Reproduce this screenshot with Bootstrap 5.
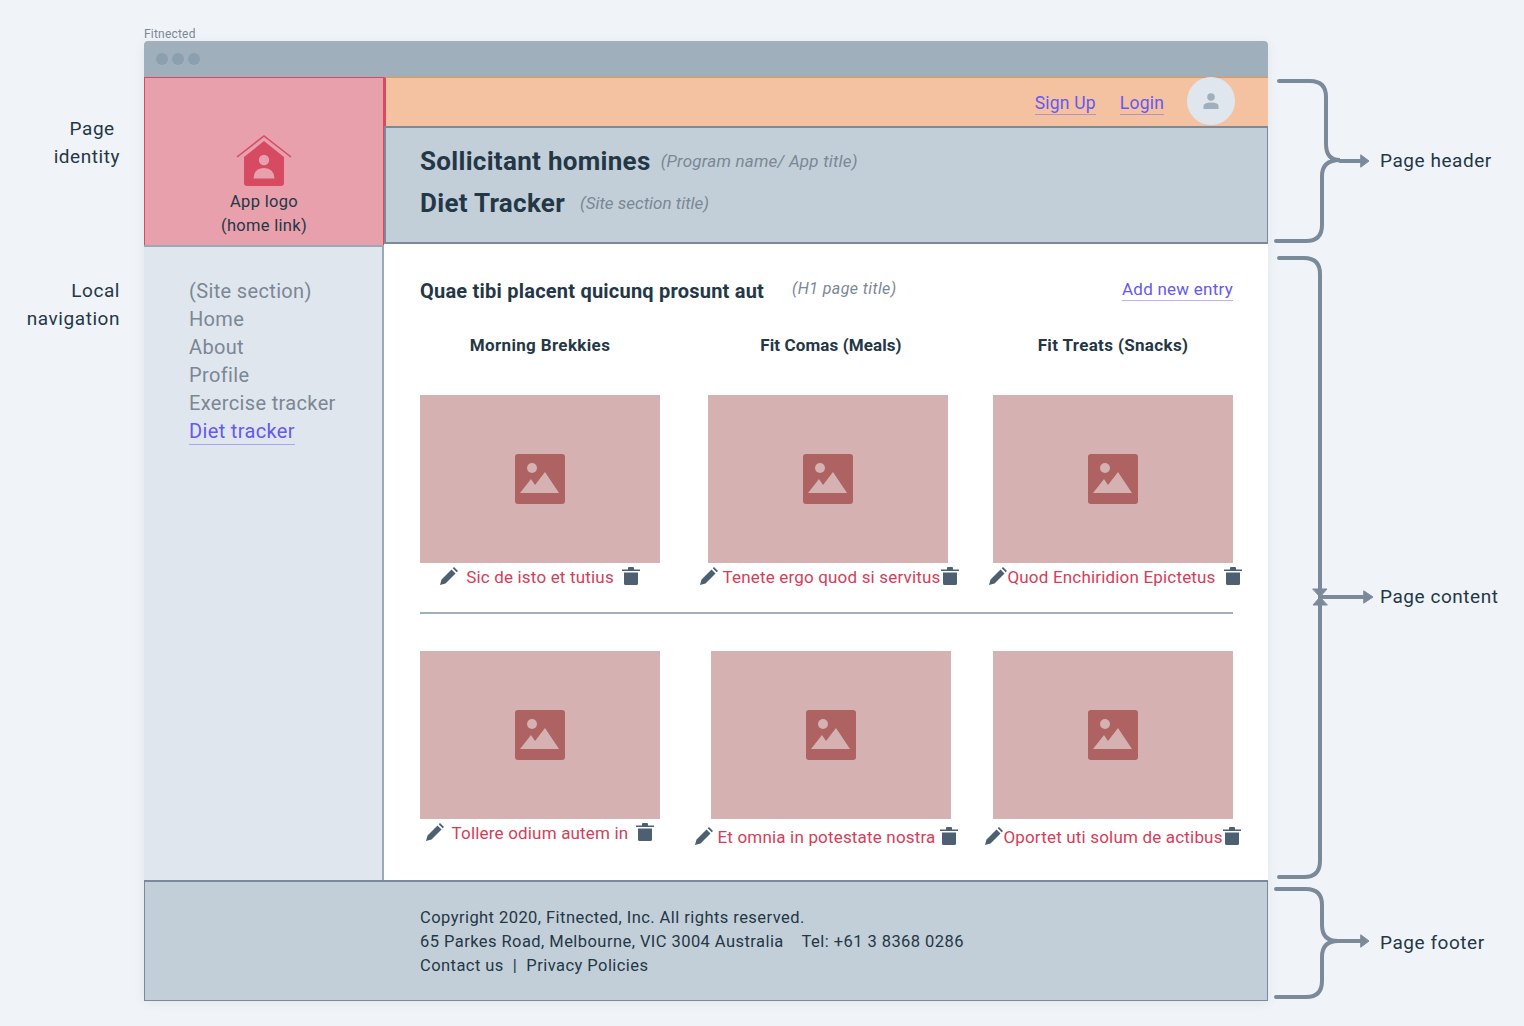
<!DOCTYPE html>
<html lang="en">
<head>
  <meta charset="UTF-8" />
  <meta name="viewport" content="width=device-width, initial-scale=1.0" />
  <title>Fitnected wireframe</title>
  <link href="https://cdn.jsdelivr.net/npm/bootstrap@5.3.3/dist/css/bootstrap.min.css" rel="stylesheet" />
  <style>
    body {
      background-color: #f0f4f8;
      color: #243746;
      font-family: Roboto, "Liberation Sans", sans-serif;
      overflow: hidden;
    }

    .sheet { width: 1524px; height: 1026px; }

    /* annotations either side of the wireframe */
    .notes-left { width: 144px; padding: 115px 24px 0 0; text-align: right; font-size: 19px; line-height: 28px; letter-spacing: .55px; }
    .notes-left .second { margin-top: 106px; }
    .notes-right { padding: 78px 0 0 4px; font-size: 19px; letter-spacing: .55px; }
    .notes-right svg { display: block; flex: none; }
    .brace-content { margin-top: 10px; }
    .brace-footer { margin-top: 6px; }
    .content-label { align-self: flex-start; margin-top: 329px; }
    .notes-right span { margin-left: 4px; white-space: nowrap; line-height: 28px; }

    /* browser frame */
    .frame { width: 1124px; padding-top: 27px; }
    .frame-name { font-size: 12px; line-height: 14px; letter-spacing: .2px; color: #7b8794; }
    .browser { height: 960px; box-shadow: 0 2px 10px rgba(60, 80, 100, .08); }
    .titlebar { height: 36px; background: #9fb0bc; border-radius: 4px 4px 0 0; padding-left: 12px; }
    .titlebar i { width: 12px; height: 12px; border-radius: 50%; background: #8c9fae; }

    /* page header */
    .logo-panel { width: 240px; height: 168px; background: #e8a0ad; border: 1px solid #d64a62; border-bottom: 0; padding-bottom: 7px; font-size: 16.5px; line-height: 24px; letter-spacing: .3px; }
    .logo-panel svg { margin-bottom: 4px; }
    .header-side { width: 884px; background: #fff; }
    .topbar { height: 49px; background: #f4c2a0; border-top: 1px solid #e9974f; border-left: 2px solid #d64a62; padding-right: 33px; font-size: 17.5px; letter-spacing: .2px; }
    .topbar .wire-link { margin-top: 2px; }
    .avatar { width: 48px; height: 48px; border-radius: 50%; background: #dfe6ee; margin-left: 23px; margin-top: -2px; }
    .band { height: 118px; background: #c2cfd9; border: 2px solid #7b8a9a; border-right-width: 1px; padding-left: 34px; }
    .band-line { line-height: 42px; }
    .band-title { font-size: 26px; font-weight: 700; letter-spacing: .3px; margin: 0 10px 0 0; line-height: 42px; }
    .hint { font-style: italic; color: #7b8794; font-size: 17px; letter-spacing: .2px; }
    .band-line .tight { letter-spacing: 0; margin-left: 5px; }

    a.wire-link { color: #6559f0; text-decoration: none; border-bottom: 1.5px solid rgba(101, 89, 240, .45); line-height: 22px; display: inline-block; }

    /* body */
    .main-row { height: 635px; }
    .side-nav { width: 240px; background: #dfe6ee; border-top: 2px solid #9aa9b6; border-right: 2px solid #9aa9b6; padding: 30px 0 0 45px; font-size: 20px; letter-spacing: .35px; color: #7b8794; }
    .side-nav li { line-height: 28px; height: 28px; }
    .side-nav a.wire-link { line-height: 25px; }
    .page-main { width: 884px; background: #fff; padding: 32px 35px 0 36px; }
    .page-head { height: 28px; }
    .page-title { font-size: 20px; font-weight: 700; letter-spacing: .22px; margin: 0 28px 0 0; line-height: 28px; }
    .page-head .hint { font-size: 16px; letter-spacing: .4px; margin-top: -4px; }
    .page-head .wire-link { font-size: 17px; letter-spacing: .25px; margin-top: -4px; }
    .col-heads { margin-top: 28px; height: 24px; font-size: 17px; font-weight: 700; line-height: 24px; letter-spacing: .35px; }
    .col-heads div { width: 240px; text-align: center; }
    .col-heads .mid { margin-left: 51px; letter-spacing: .1px; }
    .col-heads .last { margin-left: 42px; }
    .shots { margin-top: 38px; }
    .shots.two { margin-top: 37px; }
    .shots .mid { margin-left: 48px; }
    .shots .last { margin-left: 45px; }
    .shots.two .mid { margin-left: 51px; }
    .shots.two .last { margin-left: 42px; }
    .shot { width: 240px; }
    .thumb { height: 168px; background: #d5b1b1; }
    .caption { height: 30px; font-size: 17px; letter-spacing: .18px; color: #d63d58; white-space: nowrap; }
    .caption.down { margin-top: 4px; }
    .caption svg { flex: none; margin-top: -4px; }
    .shift-a { padding-left: 3px; }
    .shift-b { padding-left: 5px; }
    .shift-c { padding-right: 9px; }
    .divider { height: 2px; background: #9fb0bc; margin-top: 19px; }

    /* footer */
    .page-footer { height: 121px; background: #c2cfd9; border: 1px solid #7b8a9a; border-top-width: 2px; padding: 24px 0 0 275px; font-size: 16.5px; line-height: 24px; letter-spacing: .44px; }
  </style>
</head>
<body>
  <svg width="0" height="0" class="d-none">
    <symbol id="pic" viewBox="0 0 50 50">
      <rect width="50" height="50" rx="3" fill="#ae6262" />
      <circle cx="17" cy="14" r="5" fill="#d5b1b1" />
      <path d="M5 39 L16 25 L20 31 L30 18 L44 39 Z" fill="#d5b1b1" />
    </symbol>
    <symbol id="pen" viewBox="0 0 18 18">
      <path d="M0 18 L1.5 12.5 L11.5 2.5 L15.5 6.5 L5.5 16.5 Z M12.7 1.3 L14 0 L18 4 L16.7 5.3 Z" fill="#4d6072" />
    </symbol>
    <symbol id="bin" viewBox="0 0 18 18">
      <path d="M0 2.5 H6 V1 Q6 0 7 0 H11 Q12 0 12 1 V2.5 H18 V4 H0 Z M2 5.5 H16 V16.5 Q16 18 14.500 18 H3.500 Q2 18 2 16.500 Z" fill="#4d6072" />
    </symbol>
  </svg>

  <div class="sheet d-flex">
    <div class="notes-left">
      <div>Page&nbsp;<br />identity</div>
      <div class="second">Local<br />navigation</div>
    </div>

    <div class="frame">
      <div class="frame-name">Fitnected</div>
      <div class="browser d-flex flex-column">
        <div class="titlebar d-flex align-items-center gap-1">
          <i></i><i></i><i></i>
        </div>

        <div class="d-flex">
          <div class="logo-panel d-flex flex-column align-items-center justify-content-end text-center">
            <svg width="56" height="52" viewBox="0 0 56 52">
              <path d="M1 23 L28 2 L55 23" fill="none" stroke="#d64a62" stroke-width="1.500" />
              <path d="M8 23 L28 7 L48 23 V49 Q48 52 45 52 H11 Q8 52 8 49 Z" fill="#d64a62" />
              <circle cx="28" cy="26" r="5.200" fill="#e8a0ad" />
              <path d="M17.500 44.500 Q18 34 28 34 Q38 34 38.500 44.500 Z" fill="#e8a0ad" />
            </svg>
            <div>App logo<br />(home link)</div>
          </div>
          <div class="header-side">
            <div class="topbar d-flex align-items-center justify-content-end">
              <a class="wire-link" href="#">Sign Up</a>
              <a class="wire-link ms-4" href="#">Login</a>
              <div class="avatar d-flex align-items-center justify-content-center">
                <svg width="16" height="16" viewBox="0 0 16 16">
                  <circle cx="8" cy="4" r="3.800" fill="#9fb0bc" />
                  <path d="M0.500 16 V13 Q0.500 9.500 8 9.500 Q15.500 9.500 15.500 13 V16 Z" fill="#9fb0bc" />
                </svg>
              </div>
            </div>
            <div class="band">
              <div class="band-line d-flex align-items-center mt-2 pt-1">
                <h2 class="band-title">Sollicitant homines</h2>
                <span class="hint">(Program name/ App title)</span>
              </div>
              <div class="band-line d-flex align-items-center">
                <h3 class="band-title">Diet Tracker</h3>
                <span class="hint tight">(Site section title)</span>
              </div>
            </div>
          </div>
        </div>

        <div class="main-row d-flex">
          <nav class="side-nav">
            <ul class="list-unstyled m-0">
              <li>(Site section)</li>
              <li>Home</li>
              <li>About</li>
              <li>Profile</li>
              <li>Exercise tracker</li>
              <li><a class="wire-link" href="#">Diet tracker</a></li>
            </ul>
          </nav>

          <main class="page-main">
            <div class="page-head d-flex align-items-center">
              <h1 class="page-title">Quae tibi placent quicunq prosunt aut</h1>
              <span class="hint">(H1 page title)</span>
              <a class="wire-link ms-auto" href="#">Add new entry</a>
            </div>

            <div class="col-heads d-flex">
              <div>Morning Brekkies</div>
              <div class="mid">Fit Comas (Meals)</div>
              <div class="last">Fit Treats (Snacks)</div>
            </div>

            <div class="shots d-flex">
              <div class="shot">
                <div class="thumb d-flex align-items-center justify-content-center"><svg width="50" height="50"><use href="#pic" /></svg></div>
                <div class="caption d-flex align-items-center justify-content-center">
                  <svg width="18" height="18" class="me-2"><use href="#pen" /></svg>Sic de isto et tutius<svg width="18" height="18" class="ms-2"><use href="#bin" /></svg>
                </div>
              </div>
              <div class="shot mid">
                <div class="thumb d-flex align-items-center justify-content-center"><svg width="50" height="50"><use href="#pic" /></svg></div>
                <div class="caption shift-a d-flex align-items-center justify-content-center">
                  <svg width="18" height="18" class="me-1"><use href="#pen" /></svg>Tenete ergo quod si servitus<svg width="18" height="18"><use href="#bin" /></svg>
                </div>
              </div>
              <div class="shot last">
                <div class="thumb d-flex align-items-center justify-content-center"><svg width="50" height="50"><use href="#pic" /></svg></div>
                <div class="caption shift-b d-flex align-items-center justify-content-center">
                  <svg width="18" height="18"><use href="#pen" /></svg>Quod Enchiridion Epictetus<svg width="18" height="18" class="ms-2"><use href="#bin" /></svg>
                </div>
              </div>
            </div>

            <div class="divider"></div>

            <div class="shots two d-flex">
              <div class="shot">
                <div class="thumb d-flex align-items-center justify-content-center"><svg width="50" height="50"><use href="#pic" /></svg></div>
                <div class="caption d-flex align-items-center justify-content-center">
                  <svg width="18" height="18" class="me-2"><use href="#pen" /></svg>Tollere odium autem in<svg width="18" height="18" class="ms-2"><use href="#bin" /></svg>
                </div>
              </div>
              <div class="shot mid">
                <div class="thumb d-flex align-items-center justify-content-center"><svg width="50" height="50"><use href="#pic" /></svg></div>
                <div class="caption down shift-c d-flex align-items-center justify-content-center">
                  <svg width="18" height="18" class="me-1"><use href="#pen" /></svg>Et omnia in potestate nostra<svg width="18" height="18" class="ms-1"><use href="#bin" /></svg>
                </div>
              </div>
              <div class="shot last">
                <div class="thumb d-flex align-items-center justify-content-center"><svg width="50" height="50"><use href="#pic" /></svg></div>
                <div class="caption down d-flex align-items-center justify-content-center">
                  <svg width="18" height="18"><use href="#pen" /></svg>Oportet uti solum de actibus<svg width="18" height="18"><use href="#bin" /></svg>
                </div>
              </div>
            </div>
          </main>
        </div>

        <footer class="page-footer">
          Copyright 2020, Fitnected, Inc. All rights reserved.<br />
          65 Parkes Road, Melbourne, VIC 3004 Australia &nbsp;&nbsp; Tel: +61 3 8368 0286<br />
          Contact us &nbsp;|&nbsp; Privacy Policies
        </footer>
      </div>
    </div>

    <div class="notes-right d-flex flex-column">
      <div class="d-flex align-items-center">
        <svg width="104" height="166" viewBox="1272 78 104 166" fill="none" stroke="#7b8a9a" stroke-width="4" stroke-linecap="round">
          <path d="M1279 81 H1310 Q1326 81 1326 97 V144 Q1326 160 1340 160 Q1322 160 1322 176 V225 Q1322 241 1306 241 H1276" />
          <path d="M1340 161 H1362" />
          <path d="M1361 155 L1369 161 L1361 167 Z" fill="#7b8a9a" stroke-width="1" />
        </svg>
        <span>Page header</span>
      </div>
      <div class="d-flex brace-content">
        <svg width="104" height="626" viewBox="1272 254 104 626" fill="none" stroke="#7b8a9a" stroke-width="4" stroke-linecap="round">
          <path d="M1279 258 H1304 Q1320 258 1320 274 V861 Q1320 877 1304 877 H1279" />
          <path d="M1320 597 H1364" />
          <path d="M1313 589 H1327 L1313 605 H1327 Z" fill="#7b8a9a" stroke-width="1" />
          <path d="M1364 591 L1373 597 L1364 603 Z" fill="#7b8a9a" stroke-width="1" />
        </svg>
        <span class="content-label">Page content</span>
      </div>
      <div class="d-flex align-items-center brace-footer">
        <svg width="104" height="114" viewBox="1272 886 104 114" fill="none" stroke="#7b8a9a" stroke-width="4" stroke-linecap="round">
          <path d="M1276 889 H1306 Q1322 889 1322 905 V925 Q1322 941 1338 941 Q1322 941 1322 957 V981 Q1322 997 1306 997 H1276" />
          <path d="M1338 941 H1362" />
          <path d="M1361 935 L1369 941 L1361 947 Z" fill="#7b8a9a" stroke-width="1" />
        </svg>
        <span>Page footer</span>
      </div>
    </div>
  </div>

  <script src="https://cdn.jsdelivr.net/npm/bootstrap@5.3.3/dist/js/bootstrap.bundle.min.js"></script>
</body>
</html>
